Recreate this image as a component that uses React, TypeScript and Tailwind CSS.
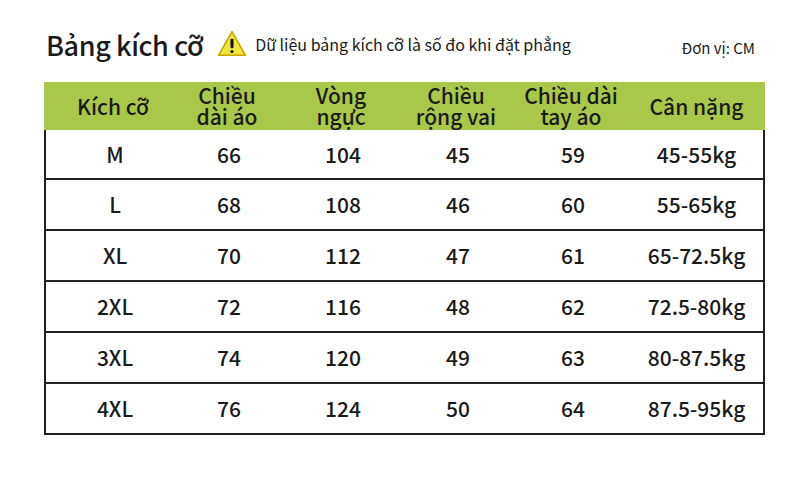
const headers = [
  ["Kích cỡ"],
  ["Chiều", "dài áo"],
  ["Vòng", "ngực"],
  ["Chiều", "rộng vai"],
  ["Chiều dài", "tay áo"],
  ["Cân nặng"],
];

const rows = [
  ["M", "66", "104", "45", "59", "45-55kg"],
  ["L", "68", "108", "46", "60", "55-65kg"],
  ["XL", "70", "112", "47", "61", "65-72.5kg"],
  ["2XL", "72", "116", "48", "62", "72.5-80kg"],
  ["3XL", "74", "120", "49", "63", "80-87.5kg"],
  ["4XL", "76", "124", "50", "64", "87.5-95kg"],
];

const cols = "grid grid-cols-[114px_114px_114px_116px_114px_1fr] pl-[12px]";

function WarningIcon() {
  return (
    <svg width="30" height="27" viewBox="0 0 28 25">
      <path d="M14 1.5 L26.5 23.5 H1.5 Z" fill="#f2e63a" stroke="#c9a400" strokeWidth="1.5" strokeLinejoin="round" />
      <rect x="12.6" y="8" width="2.8" height="9" rx="1" fill="#111" />
      <circle cx="14" cy="20" r="1.5" fill="#111" />
    </svg>
  );
}

export default function App() {
  return (
    <div
      className="w-[790px] h-[491px] bg-white text-[#1a1a1a] pt-[24px]"
      style={{ fontFamily: '"Noto Sans CJK SC", "Noto Sans", sans-serif' }}
    >
      {/* Title line */}
      <div className="flex items-center pl-[46px] pr-[35px] h-[40px]">
        <h1 className="text-[27px] leading-none font-medium tracking-[-0.4px]">Bảng kích cỡ</h1>
        <div className="ml-[14px] mt-[-2px]">
          <WarningIcon />
        </div>
        <span className="ml-[8px] text-[16px] leading-none">Dữ liệu bảng kích cỡ là số đo khi đặt phẳng</span>
        <span className="ml-auto mt-[6px] text-[15px] leading-none">Đơn vị: CM</span>
      </div>

      {/* Table */}
      <div className="ml-[44px] mt-[18px] w-[721px]">
        <div className={`${cols} h-[48px] bg-[#a9c84a] items-center`}>
          {headers.map((h, i) => (
            <div key={i} className="flex flex-col items-center text-[21px] leading-[21px] font-medium">
              {h.map((l) => (
                <span key={l}>{l}</span>
              ))}
            </div>
          ))}
        </div>
        <div className="border-x-2 border-[#222]">
          {rows.map((r, ri) => (
            <div
              key={ri}
              className={`${cols} items-center border-b-2 border-[#222] ${ri === 0 ? "h-[50px]" : "h-[51px]"}`}
            >
              {r.map((c, ci) => (
                <div key={ci} className="text-center text-[21px] leading-none font-medium">
                  {c}
                </div>
              ))}
            </div>
          ))}
        </div>
      </div>
    </div>
  );
}
